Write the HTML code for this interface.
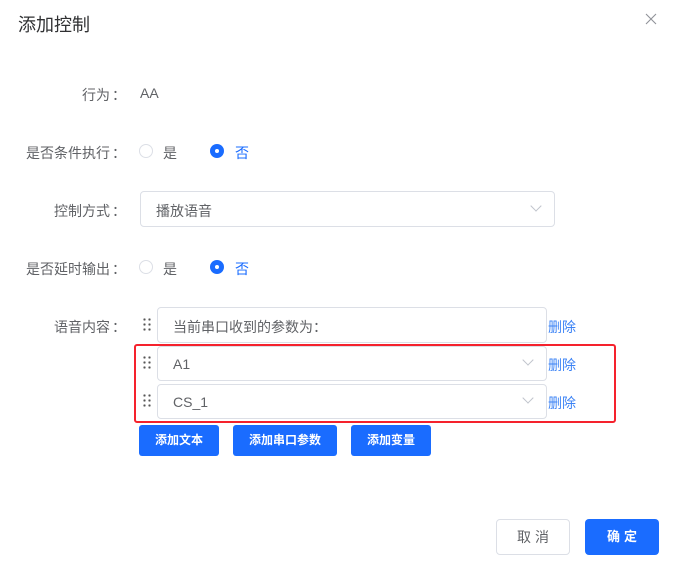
<!DOCTYPE html>
<html><head><meta charset="utf-8"><style>
*{box-sizing:border-box;margin:0;padding:0}
body{width:676px;height:571px;background:#fff;font-family:"Liberation Sans","Noto Sans CJK SC",sans-serif;color:#606266;position:relative;overflow:hidden;font-size:14px}
.a{position:absolute}
.lbl{position:absolute;right:548px;text-align:right;white-space:nowrap}
.lbl b{font-weight:normal;display:inline-block;width:18px;text-align:center}
.radio{position:absolute;width:14px;height:14px;border-radius:50%;border:1px solid #dcdfe6}
.radio.on{border:none;background:#1a6cff}
.radio.on::after{content:"";position:absolute;left:5px;top:5px;width:4px;height:4px;border-radius:50%;background:#fff}
.inp{position:absolute;border:1px solid #dcdfe6;border-radius:4px;background:#fff}
.chev{position:absolute;right:14px;top:12px;width:8px;height:8px;border-right:1px solid #c0c4cc;border-bottom:1px solid #c0c4cc;transform:rotate(45deg)}
.btn{position:absolute;background:#1a6cff;color:#fff;border-radius:3px;font-size:12px;font-weight:bold;text-align:center;line-height:30px}
.del{position:absolute;left:548px;color:#3c83f5;font-size:14px}
.drag{position:absolute;left:143px;width:9px;height:14px;background-image:radial-gradient(circle,#555 1px,transparent 1.3px);background-size:5px 5px;background-position:-1px -1px}
</style></head><body>
<div class="a" style="left:18px;top:11px;font-size:18px;color:#303133">添加控制</div>
<svg class="a" style="left:645px;top:13px" width="12" height="12" viewBox="0 0 12 12"><path d="M1 1L11 11M11 1L1 11" stroke="#909399" stroke-width="1.1"/></svg>

<div class="lbl" style="top:85px">行为<b>：</b></div>
<div class="a" style="left:140px;top:85px">AA</div>

<div class="lbl" style="top:143px">是否条件执行<b>：</b></div>
<div class="radio" style="left:139px;top:144px"></div><div class="a" style="left:163px;top:143px">是</div>
<div class="radio on" style="left:210px;top:144px"></div><div class="a" style="left:235px;top:143px;color:#1a6cff">否</div>

<div class="lbl" style="top:201px">控制方式<b>：</b></div>
<div class="inp" style="left:140px;top:191px;width:415px;height:36px"><div class="a" style="left:15px;top:9px">播放语音</div><div class="chev" style="top:10px"></div></div>

<div class="lbl" style="top:259px">是否延时输出<b>：</b></div>
<div class="radio" style="left:139px;top:260px"></div><div class="a" style="left:163px;top:259px">是</div>
<div class="radio on" style="left:210px;top:260px"></div><div class="a" style="left:235px;top:259px;color:#1a6cff">否</div>

<div class="lbl" style="top:317px">语音内容<b>：</b></div>
<div class="drag" style="top:318px"></div>
<div class="inp" style="left:157px;top:307px;width:390px;height:36px"><div class="a" style="left:15px;top:9px">当前串口收到的参数为：</div></div>
<div class="del" style="top:317px">删除</div>

<div class="a" style="left:134px;top:344px;width:482px;height:79px;border:2px solid #f5222d;border-radius:3px"></div>
<div class="drag" style="top:356px"></div>
<div class="inp" style="left:157px;top:346px;width:390px;height:35px"><div class="a" style="left:15px;top:9px">A1</div><div class="chev" style="top:9px"></div></div>
<div class="del" style="top:355px">删除</div>
<div class="drag" style="top:394px"></div>
<div class="inp" style="left:157px;top:384px;width:390px;height:35px"><div class="a" style="left:15px;top:9px">CS_1</div><div class="chev" style="top:9px"></div></div>
<div class="del" style="top:393px">删除</div>

<div class="btn" style="left:139px;top:425px;width:80px;height:31px">添加文本</div>
<div class="btn" style="left:233px;top:425px;width:104px;height:31px">添加串口参数</div>
<div class="btn" style="left:351px;top:425px;width:80px;height:31px">添加变量</div>

<div class="a" style="left:496px;top:519px;width:74px;height:36px;border:1px solid #dcdfe6;border-radius:4px;text-align:center;line-height:34px;letter-spacing:4px;padding-left:4px">取消</div>
<div class="a" style="left:585px;top:519px;width:74px;height:36px;background:#1a6cff;color:#fff;border-radius:4px;text-align:center;line-height:36px;letter-spacing:4px;padding-left:4px;font-weight:bold;font-size:13px">确定</div>
</body></html>
